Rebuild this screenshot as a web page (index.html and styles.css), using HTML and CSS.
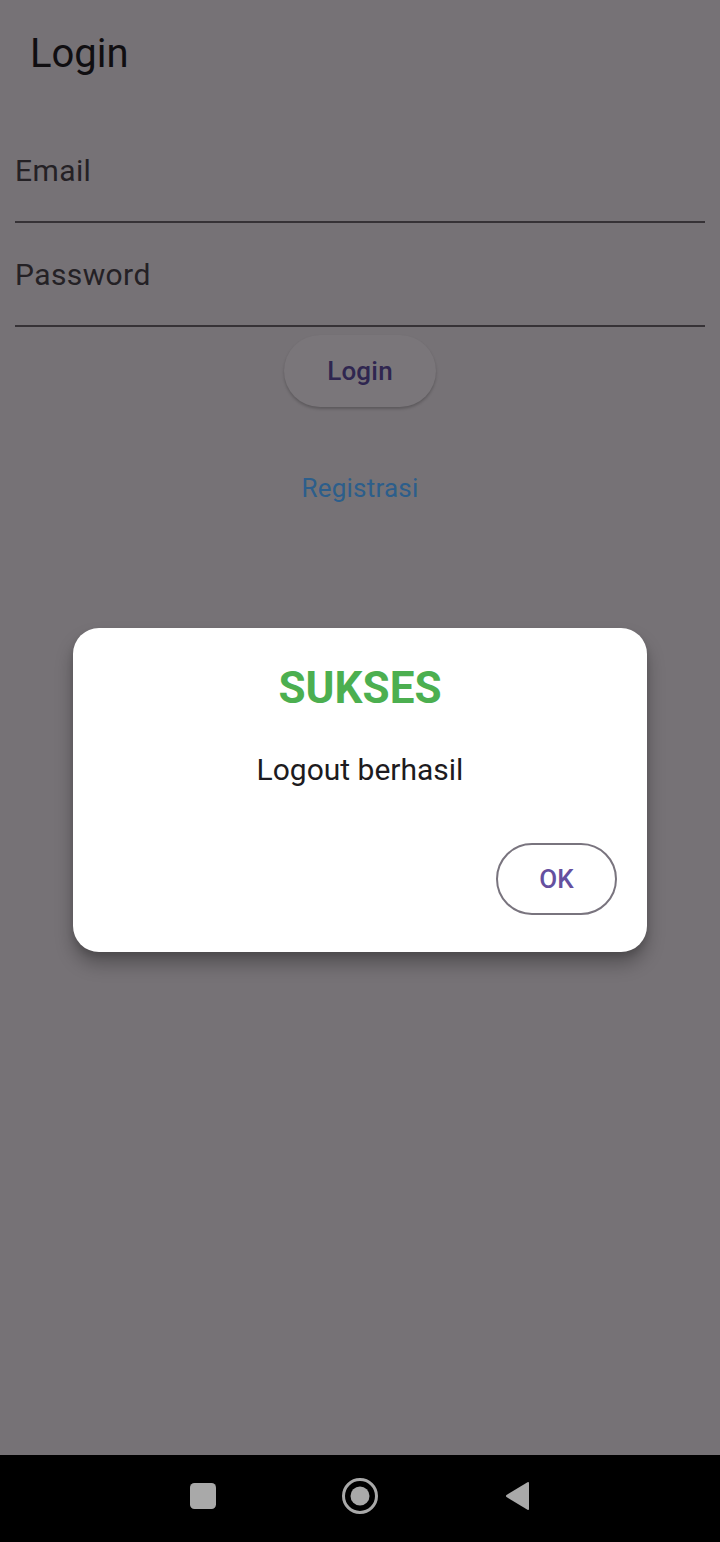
FILE: index.html
```html
<!DOCTYPE html>
<html lang="id">
<head>
<meta charset="utf-8">
<title>Login</title>
<link rel="stylesheet" href="styles.css">
</head>
<body>
<div class="screen">
  <main class="page">
    <header class="appbar"><h1 class="appbar-title">Login</h1></header>
    <form class="form">
      <div class="field"><span class="field-label">Email</span></div>
      <div class="field"><span class="field-label">Password</span></div>
      <div class="actions">
        <button type="button" class="btn-elevated">Login</button>
        <a class="link" href="#">Registrasi</a>
      </div>
    </form>
    <div class="dialog" role="dialog">
      <h2 class="dialog-title">SUKSES</h2>
      <p class="dialog-text">Logout berhasil</p>
      <div class="dialog-actions">
        <button type="button" class="btn-outline">OK</button>
      </div>
    </div>
  </main>
  <nav class="navbar">
    <span class="nav-item">
      <svg width="26" height="26" viewBox="0 0 26 26"><rect x="0" y="0" width="26" height="26" rx="4.5" fill="#a9a9a9"/></svg>
    </span>
    <span class="nav-item">
      <svg width="38" height="38" viewBox="0 0 38 38"><circle cx="19" cy="19" r="16.5" fill="none" stroke="#a9a9a9" stroke-width="3"/><circle cx="19" cy="19" r="9.5" fill="#a9a9a9"/></svg>
    </span>
    <span class="nav-item">
      <svg width="26" height="32" viewBox="0 0 26 32"><path d="M23.5 2.2 L2.5 15 Q1.4 16 2.5 17 L23.5 29.8 Q25 30.5 25 28.8 L25 3.2 Q25 1.5 23.5 2.2 Z" fill="#a9a9a9"/></svg>
    </span>
  </nav>
</div>
</body>
</html>
```

FILE: styles.css
```css
* { box-sizing: border-box; }

html, body {
  margin: 0;
  padding: 0;
}

body {
  font-family: Roboto, "Noto Sans", "Liberation Sans", sans-serif;
  background: #767276;
}

.screen {
  width: 720px;
  height: 1542px;
  display: flex;
  flex-direction: column;
}

.page {
  flex: 1;
  position: relative;
  background: #767276;
}

.appbar {
  height: 119px;
  padding-left: 30px;
  display: flex;
  align-items: flex-start;
}

.appbar-title {
  margin: 30px 0 0 0;
  font-size: 40px;
  line-height: 48px;
  font-weight: 400;
  color: #100e11;
}

.form {
  padding: 0 15px;
  display: flex;
  flex-direction: column;
}

.field {
  height: 104px;
  border-bottom: 2px solid #363236;
  padding-top: 34px;
}

.field-label {
  display: block;
  font-size: 30px;
  line-height: 36px;
  letter-spacing: 0.4px;
  color: #242125;
}

.actions {
  display: flex;
  flex-direction: column;
  align-items: center;
}

.btn-elevated {
  margin-top: 8px;
  width: 152px;
  height: 72px;
  border: none;
  border-radius: 36px;
  background: #7a767a;
  box-shadow: 0 2px 3px rgba(0, 0, 0, 0.22);
  font-family: inherit;
  font-size: 26px;
  font-weight: 500;
  color: #2f2650;
  letter-spacing: 0.2px;
}

.link {
  margin-top: 66px;
  font-size: 26px;
  line-height: 30px;
  font-weight: 400;
  color: #2c5e8b;
  text-decoration: none;
  letter-spacing: 0.2px;
}

.dialog {
  position: absolute;
  left: 73px;
  top: 628px;
  width: 574px;
  height: 324px;
  background: #ffffff;
  border-radius: 26px;
  box-shadow: 0 12px 18px rgba(0, 0, 0, 0.28), 0 4px 6px rgba(0, 0, 0, 0.12);
  padding: 34px 30px 0 30px;
  display: flex;
  flex-direction: column;
}

.dialog-title {
  margin: 0;
  text-align: center;
  font-size: 44px;
  line-height: 52px;
  font-weight: 700;
  color: #4caf50;
}

.dialog-text {
  margin: 38px 0 0 0;
  text-align: center;
  font-size: 30px;
  line-height: 36px;
  color: #1d1b20;
}

.dialog-actions {
  margin-top: 55px;
  display: flex;
  justify-content: flex-end;
}

.btn-outline {
  width: 121px;
  height: 72px;
  border: 2px solid #79747e;
  border-radius: 36px;
  background: #ffffff;
  font-family: inherit;
  font-size: 26px;
  font-weight: 500;
  color: #65509f;
  margin-right: 0;
}

.navbar {
  height: 87px;
  padding-bottom: 5px;
  background: #000000;
  display: flex;
  justify-content: center;
  align-items: center;
  gap: 97px;
}

.nav-item {
  width: 60px;
  height: 40px;
  display: flex;
  align-items: center;
  justify-content: center;
}
```
